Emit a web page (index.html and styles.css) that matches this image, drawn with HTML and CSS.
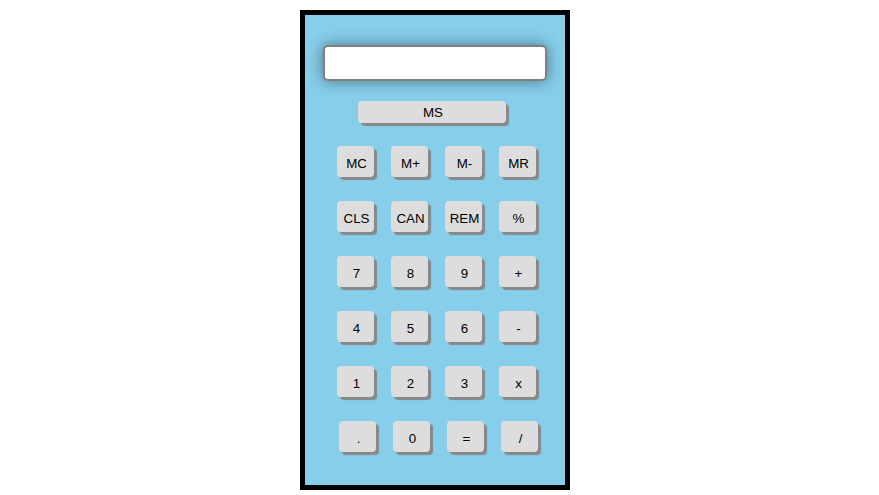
FILE: index.html
```html
<!DOCTYPE html>
<html>
<head>
<meta charset="utf-8">
<link rel="stylesheet" href="styles.css">
</head>
<body>
<div class="calc">
  <input class="display" type="text">
  <button class="btn ms">MS</button>
  <div class="row"><button class="btn">MC</button><button class="btn">M+</button><button class="btn">M-</button><button class="btn">MR</button></div>
  <div class="row"><button class="btn">CLS</button><button class="btn">CAN</button><button class="btn">REM</button><button class="btn">%</button></div>
  <div class="row"><button class="btn">7</button><button class="btn">8</button><button class="btn">9</button><button class="btn">+</button></div>
  <div class="row"><button class="btn">4</button><button class="btn">5</button><button class="btn">6</button><button class="btn">-</button></div>
  <div class="row"><button class="btn">1</button><button class="btn">2</button><button class="btn">3</button><button class="btn">x</button></div>
  <div class="row last"><button class="btn">.</button><button class="btn">0</button><button class="btn">=</button><button class="btn">/</button></div>
</div>
</body>
</html>
```
FILE: styles.css
```css
html, body {
  margin: 0;
  padding: 0;
  background: #fff;
}
body {
  display: flex;
  justify-content: flex-start;
  padding-top: 10px;
  padding-left: 300px;
  font-family: "Liberation Sans", Arial, sans-serif;
}
.calc {
  box-sizing: border-box;
  width: 270px;
  height: 480px;
  border: 5px solid #000;
  background: #87ceeb;
  display: flex;
  flex-direction: column;
  align-items: flex-start;
  padding-top: 30px;
}
.display {
  box-sizing: border-box;
  width: 224px;
  height: 36px;
  margin: 0 0 0 18px;
  border: 2px solid #808080;
  border-radius: 5px;
  background: #fff;
  box-shadow: 0 0 15px rgba(0, 0, 0, 0.45);
  outline: none;
}
.btn {
  box-sizing: border-box;
  width: 37px;
  height: 31px;
  margin: 0;
  padding: 3px 0 0 2px;
  border: none;
  border-radius: 4px;
  background: #dddddd;
  box-shadow: 3px 3px 1px #888888;
  font-family: "Liberation Sans", Arial, sans-serif;
  font-size: 13.33px;
  color: #000;
  white-space: nowrap;
}
.ms {
  width: 148px;
  height: 22px;
  padding: 1px 0 0 2px;
  margin-top: 20px;
  margin-bottom: 23px;
  margin-left: 53px;
}
.row {
  display: flex;
  gap: 17px;
  margin-left: 32px;
  margin-bottom: 24px;
}
.row.last {
  margin-left: 34px;
}
```
